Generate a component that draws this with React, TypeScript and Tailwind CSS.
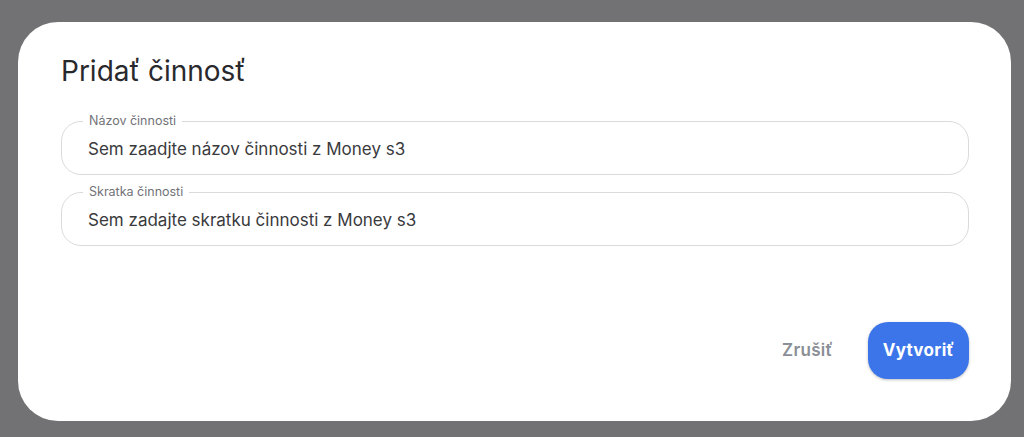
import { useState } from "react";

const fieldClass =
  "w-full h-[42px] bg-transparent text-[17px] text-[#3a3a3d] placeholder:text-[#3a3a3d] outline-none";

const Field = ({ label, placeholder }: { label: string; placeholder: string }) => {
  const [value, setValue] = useState("");
  return (
    <fieldset className="rounded-[20px] border-[1.5px] border-[#dadadd] px-[26px] pb-[4px]">
      <legend className="ml-[-5px] px-[6px] text-[12.5px] leading-[14px] text-[#727278]">
        {label}
      </legend>
      <input
        className={fieldClass}
        value={value}
        placeholder={placeholder}
        onChange={(e) => setValue(e.target.value)}
      />
    </fieldset>
  );
};

export default function App() {
  return (
    <div
      className="h-[437px] w-full bg-[#727274] pl-[18px] pr-[13px] pt-[22px] pb-[16px]"
      style={{ fontFamily: "Inter, 'Noto Sans', sans-serif" }}
    >
      <div className="flex h-[399px] flex-col rounded-[40px] bg-white pl-[43px] pr-[42px] pt-[32px] pb-[42px]">
        <h2 className="text-[28px] leading-[34px] font-normal text-[#29292d]">Pridať činnosť</h2>

        <form className="mt-[26px] flex flex-col gap-[10px]">
          <Field label="Názov činnosti" placeholder="Sem zaadjte názov činnosti z Money s3" />
          <Field label="Skratka činnosti" placeholder="Sem zadajte skratku činnosti z Money s3" />
        </form>

        <div className="mt-auto flex items-center justify-end gap-[19px]">
          <button
            type="button"
            className="px-[16px] py-[8px] text-[17px] font-semibold tracking-[0.3px] text-[#8a8e96]"
          >
            Zrušiť
          </button>
          <button
            type="button"
            className="h-[57px] w-[101px] rounded-[20px] bg-[#3c75e9] text-[17px] font-bold tracking-[0.3px] text-white shadow-[0_1px_3px_rgba(0,0,0,0.25)]"
          >
            Vytvoriť
          </button>
        </div>
      </div>
    </div>
  );
}
